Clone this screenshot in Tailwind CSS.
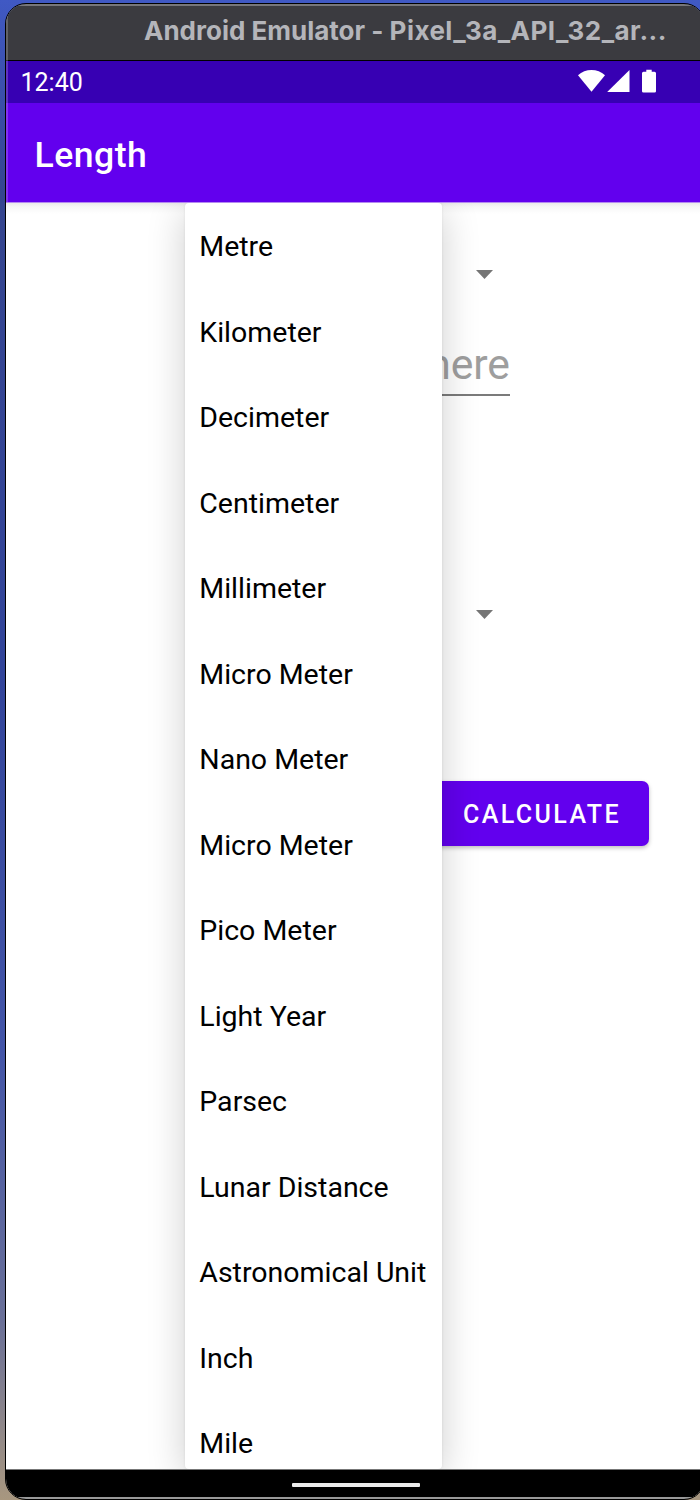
<!DOCTYPE html>
<html lang="en">
<head>
<meta charset="utf-8">
<title>Length</title>
<script src="https://cdn.jsdelivr.net/npm/@tailwindcss/browser@4"></script>
</head>
<body class="w-[700px] h-[1500px] overflow-hidden bg-[linear-gradient(180deg,#4059c4_0%,#35458f_13%,#32449a_45%,#4355a8_70%,#6a7098_88%,#a8977f_100%)] font-['Roboto',sans-serif]">
<div class="w-[700px] h-[1500px] overflow-hidden pl-[6px] pt-[4px]">
  <div class="relative flex flex-col w-[698px] h-[1495px] rounded-[20px] overflow-hidden outline outline-black bg-white">
    <header class="h-[57px] shrink-0 bg-[#3b3b40] border-t-2 border-t-[#77777b] border-b border-b-black pl-[138px] pt-[8px]">
      <h1 class="font-['Inter',sans-serif] font-bold text-[26px] leading-[34px] text-[#b4b5ba] whitespace-nowrap">Android Emulator - <span class="tracking-[0.45px]">Pixel_3a_API_32_ar...</span></h1>
    </header>
    <div class="h-[42px] shrink-0 bg-[#3700b3] flex items-center justify-between pl-[14.5px] pr-[48px] text-white">
      <span class="text-[25px] leading-[42px] pt-[2px]">12:40</span>
      <div class="flex items-start h-[24px] -mt-[2px]">
        <svg class="w-[27px] h-[24px]" viewBox="0 0 27 24" fill="#fff"><path d="M0 6.3C7.3-.7 19.7-.7 27 6.3L13.5 22.8Z"/></svg>
        <svg class="w-[23px] h-[24px] ml-[2px]" viewBox="0 0 23 24" fill="#fff"><path d="M22.5 1V23H.2Z"/></svg>
        <svg class="w-[14px] h-[24px] ml-[12px]" viewBox="0 0 14 24" fill="#fff"><path d="M4.3 .8H9.7V2.8H12.5Q14 2.8 14 4.3V22.2Q14 23.6 12.5 23.6H1.5Q0 23.6 0 22.2V4.3Q0 2.8 1.5 2.8H4.3Z"/></svg>
      </div>
    </div>
    <div class="h-[99px] shrink-0 bg-[#6200ee] flex items-center pl-[28.5px] pt-[6px]">
      <h2 class="font-medium text-[35.6px] tracking-[0.5px] text-white">Length</h2>
    </div>
    <main class="relative h-[1267px] shrink-0 border-t border-t-[#b48af0] bg-white bg-[linear-gradient(180deg,#ebebeb_0px,#f7f7f7_4px,#ffffff_11px)] overflow-hidden">
      <div class="w-[643px] flex flex-col items-end pt-[67px]">
        <svg class="w-[17px] h-[9px] mr-[156px]" viewBox="0 0 17 9" fill="#757575"><path d="M0 0H17L8.5 9Z"/></svg>
        <div class="mt-[59px] h-[58px] mr-[139px] w-[260px] border-b-2 border-b-[#7b7b7b] text-right text-[42.7px] leading-[53px] text-[#9e9e9e] whitespace-nowrap">Enter here</div>
        <svg class="w-[17px] h-[9px] mt-[214px] mr-[156px]" viewBox="0 0 17 9" fill="#757575"><path d="M0 0H17L8.5 9Z"/></svg>
        <button class="mt-[162px] h-[65px] w-[240px] rounded-[7px] bg-[#6200ee] shadow-[0_2px_4px_rgba(0,0,0,0.25)] text-white font-medium text-[25px] tracking-[2.4px] text-right pr-[28px] pt-[3px]">CALCULATE</button>
      </div>
      <ul class="absolute left-[179px] top-0 w-[256.5px] h-[1266px] bg-white rounded-[4px] shadow-[0_0_3px_rgba(0,0,0,0.08),0_8px_38px_rgba(0,0,0,0.2)] pl-[14.3px] pt-px text-[28.5px] text-black whitespace-nowrap overflow-hidden">
        <li class="h-[85.5px] leading-[85.5px]">Metre</li>
        <li class="h-[85.5px] leading-[85.5px]">Kilometer</li>
        <li class="h-[85.5px] leading-[85.5px]">Decimeter</li>
        <li class="h-[85.5px] leading-[85.5px]">Centimeter</li>
        <li class="h-[85.5px] leading-[85.5px]">Millimeter</li>
        <li class="h-[85.5px] leading-[85.5px]">Micro Meter</li>
        <li class="h-[85.5px] leading-[85.5px]">Nano Meter</li>
        <li class="h-[85.5px] leading-[85.5px]">Micro Meter</li>
        <li class="h-[85.5px] leading-[85.5px]">Pico Meter</li>
        <li class="h-[85.5px] leading-[85.5px]">Light Year</li>
        <li class="h-[85.5px] leading-[85.5px]">Parsec</li>
        <li class="h-[85.5px] leading-[85.5px]">Lunar Distance</li>
        <li class="h-[85.5px] leading-[85.5px]">Astronomical Unit</li>
        <li class="h-[85.5px] leading-[85.5px]">Inch</li>
        <li class="h-[85.5px] leading-[85.5px]">Mile</li>
      </ul>
    </main>
    <footer class="flex-1 bg-black border-t border-t-[#777] border-b-2 border-b-[#999] pt-[13px] pl-[286px]">
      <div class="w-[128px] h-[4px] rounded-[1px] bg-[#ebebeb]"></div>
    </footer>
    <div class="absolute left-0 top-0 w-[2px] h-[198px] bg-white/20"></div>
  </div>
</div>
</body>
</html>
